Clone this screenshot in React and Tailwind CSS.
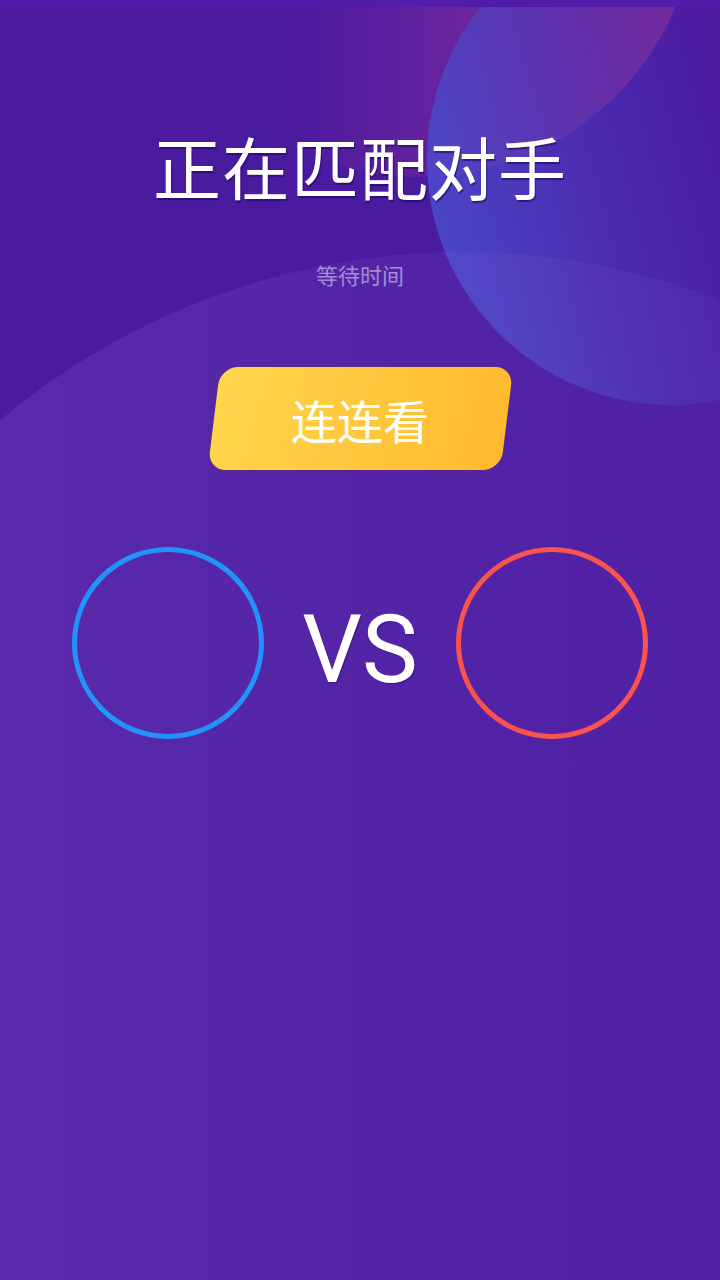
import React from "react";

const cjk = { fontFamily: '"Noto Sans CJK SC", "Noto Sans", sans-serif' };

const Backdrop = () => (
  <>
    {/* pink blob top right */}
    <div className="absolute left-[143px] top-[-377px] h-[554px] w-[554px] rounded-full bg-[linear-gradient(to_right,rgba(120,36,150,0)_25%,rgba(118,40,158,0.75)_60%,rgba(122,38,150,0.95)_100%)]" />
    {/* blue blob */}
    <div className="absolute left-[427px] top-[-85px] h-[490px] w-[490px] rounded-full bg-[linear-gradient(75deg,rgba(74,76,204,0.95)_5%,rgba(74,68,198,0.45)_35%,rgba(76,60,190,0)_62%)]" />
    {/* huge soft arc */}
    <div className="absolute left-[-256px] top-[252px] h-[1436px] w-[1436px] rounded-full bg-[linear-gradient(to_right,rgba(160,120,230,0.22)_0%,rgba(160,120,230,0.1)_45%,rgba(160,120,230,0.02)_100%)]" />
  </>
);

export default function App() {
  return (
    <div className="relative h-[1280px] w-[720px] overflow-hidden bg-[#4a1a9f]">
      <Backdrop />

      <div className="relative flex flex-col items-center">
        <div className="h-[7px] w-full bg-[#511ca7]" />

        <h1
          className="mt-[125px] text-[68px] font-normal leading-none tracking-[1px] text-white [text-shadow:1px_2px_1px_rgba(30,5,90,0.6)]"
          style={cjk}
        >
          正在匹配对手
        </h1>

        <p className="mt-[63px] text-[22px] leading-none text-[#a58cd8]" style={cjk}>
          等待时间
        </p>

        <button className="relative mt-[82px] flex h-[103px] w-[293px] items-center justify-center">
          <span className="absolute inset-0 -skew-x-[7deg] rounded-[18px] bg-[linear-gradient(100deg,#ffd64c,#ffb92e)] shadow-[0_0_0_1px_rgba(110,50,80,0.35)]" />
          <span className="relative text-[46px] leading-none text-white" style={cjk}>
            连连看
          </span>
        </button>

        <div className="mt-[77px] flex w-full items-center justify-between px-[72px]">
          <div className="h-[192px] w-[192px] rounded-full border-[5px] border-[#2393fb]" />
          <span
            className="mt-[14px] text-[94px] leading-none text-white [text-shadow:1px_1px_1px_rgba(30,5,90,0.5)]"
            style={{ fontFamily: "Roboto, sans-serif" }}
          >
            VS
          </span>
          <div className="h-[192px] w-[192px] rounded-full border-[5px] border-[#f9534f]" />
        </div>
      </div>
    </div>
  );
}
